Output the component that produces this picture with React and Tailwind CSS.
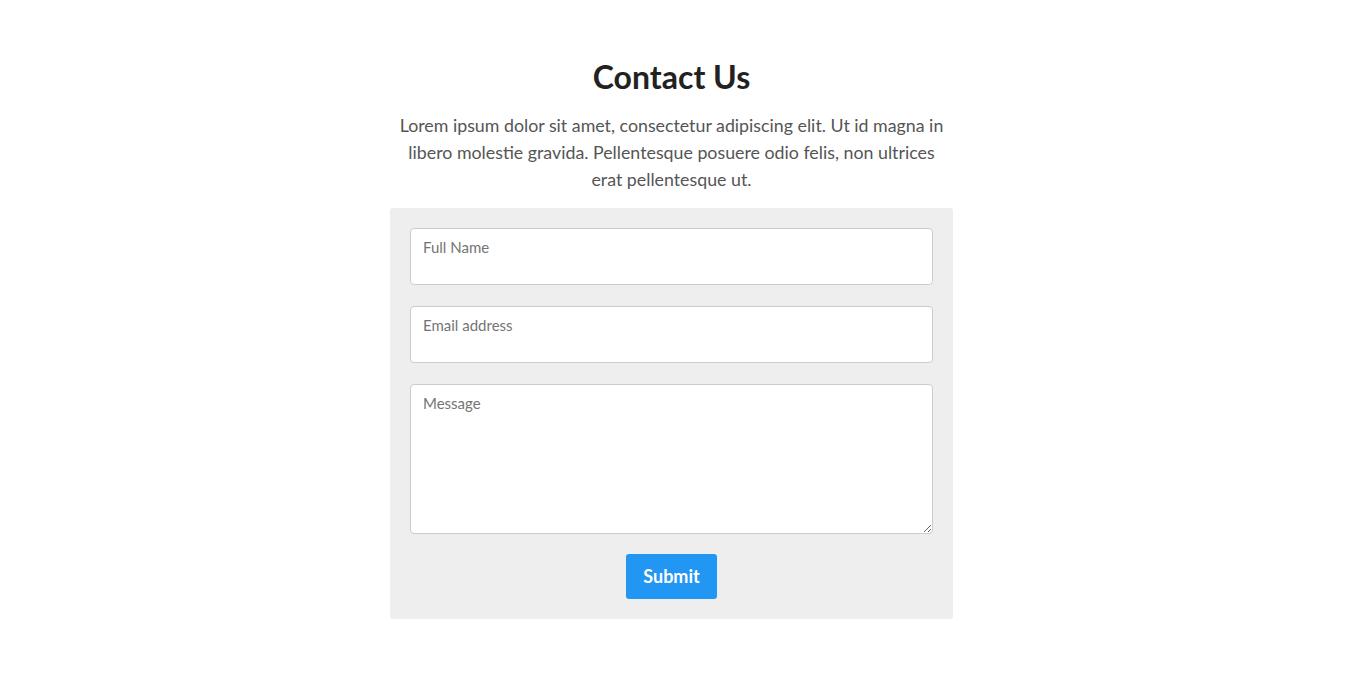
import React from 'react';

function App() {
  return (
    <div className="min-h-screen bg-white font-['Lato',sans-serif]">
      <div className="flex justify-center pr-[20px]">
        <div className="w-[563px] pt-[56px]">
          <h1 className="text-center text-[32px] font-bold leading-[42px] text-[#222]">Contact Us</h1>
          <p className="mt-[14px] px-[4px] text-center text-[17.8px] leading-[27px] text-[#555]">
            Lorem ipsum dolor sit amet, consectetur adipiscing elit. Ut id magna in libero molestie gravida.
            Pellentesque posuere odio felis, non ultrices erat pellentesque ut.
          </p>

          {/* form card */}
          <form className="mt-[15px] flex flex-col gap-[21px] rounded-[3px] bg-[#eeeeee] px-[20px] pt-[20px] pb-[20px]">
            <input
              type="text"
              placeholder="Full Name"
              className="h-[57px] w-full rounded-[4px] border border-[#ccc] bg-white px-[12px] pb-[20px] text-[15px] text-[#333] placeholder:text-[#757575] outline-none"
            />
            <input
              type="email"
              placeholder="Email address"
              className="h-[57px] w-full rounded-[4px] border border-[#ccc] bg-white px-[12px] pb-[20px] text-[15px] text-[#333] placeholder:text-[#757575] outline-none"
            />
            <textarea
              placeholder="Message"
              className="h-[150px] w-full rounded-[4px] border border-[#ccc] bg-white px-[12px] pt-[7px] pb-[10px] text-[15px] text-[#333] placeholder:text-[#757575] outline-none"
            />
            <div className="-mt-px flex justify-center">
              <button
                type="button"
                className="h-[45px] w-[91px] rounded-[3px] bg-[#2196f3] text-[18px] font-bold text-white"
              >
                Submit
              </button>
            </div>
          </form>
        </div>
      </div>
    </div>
  );
}

export default App;
